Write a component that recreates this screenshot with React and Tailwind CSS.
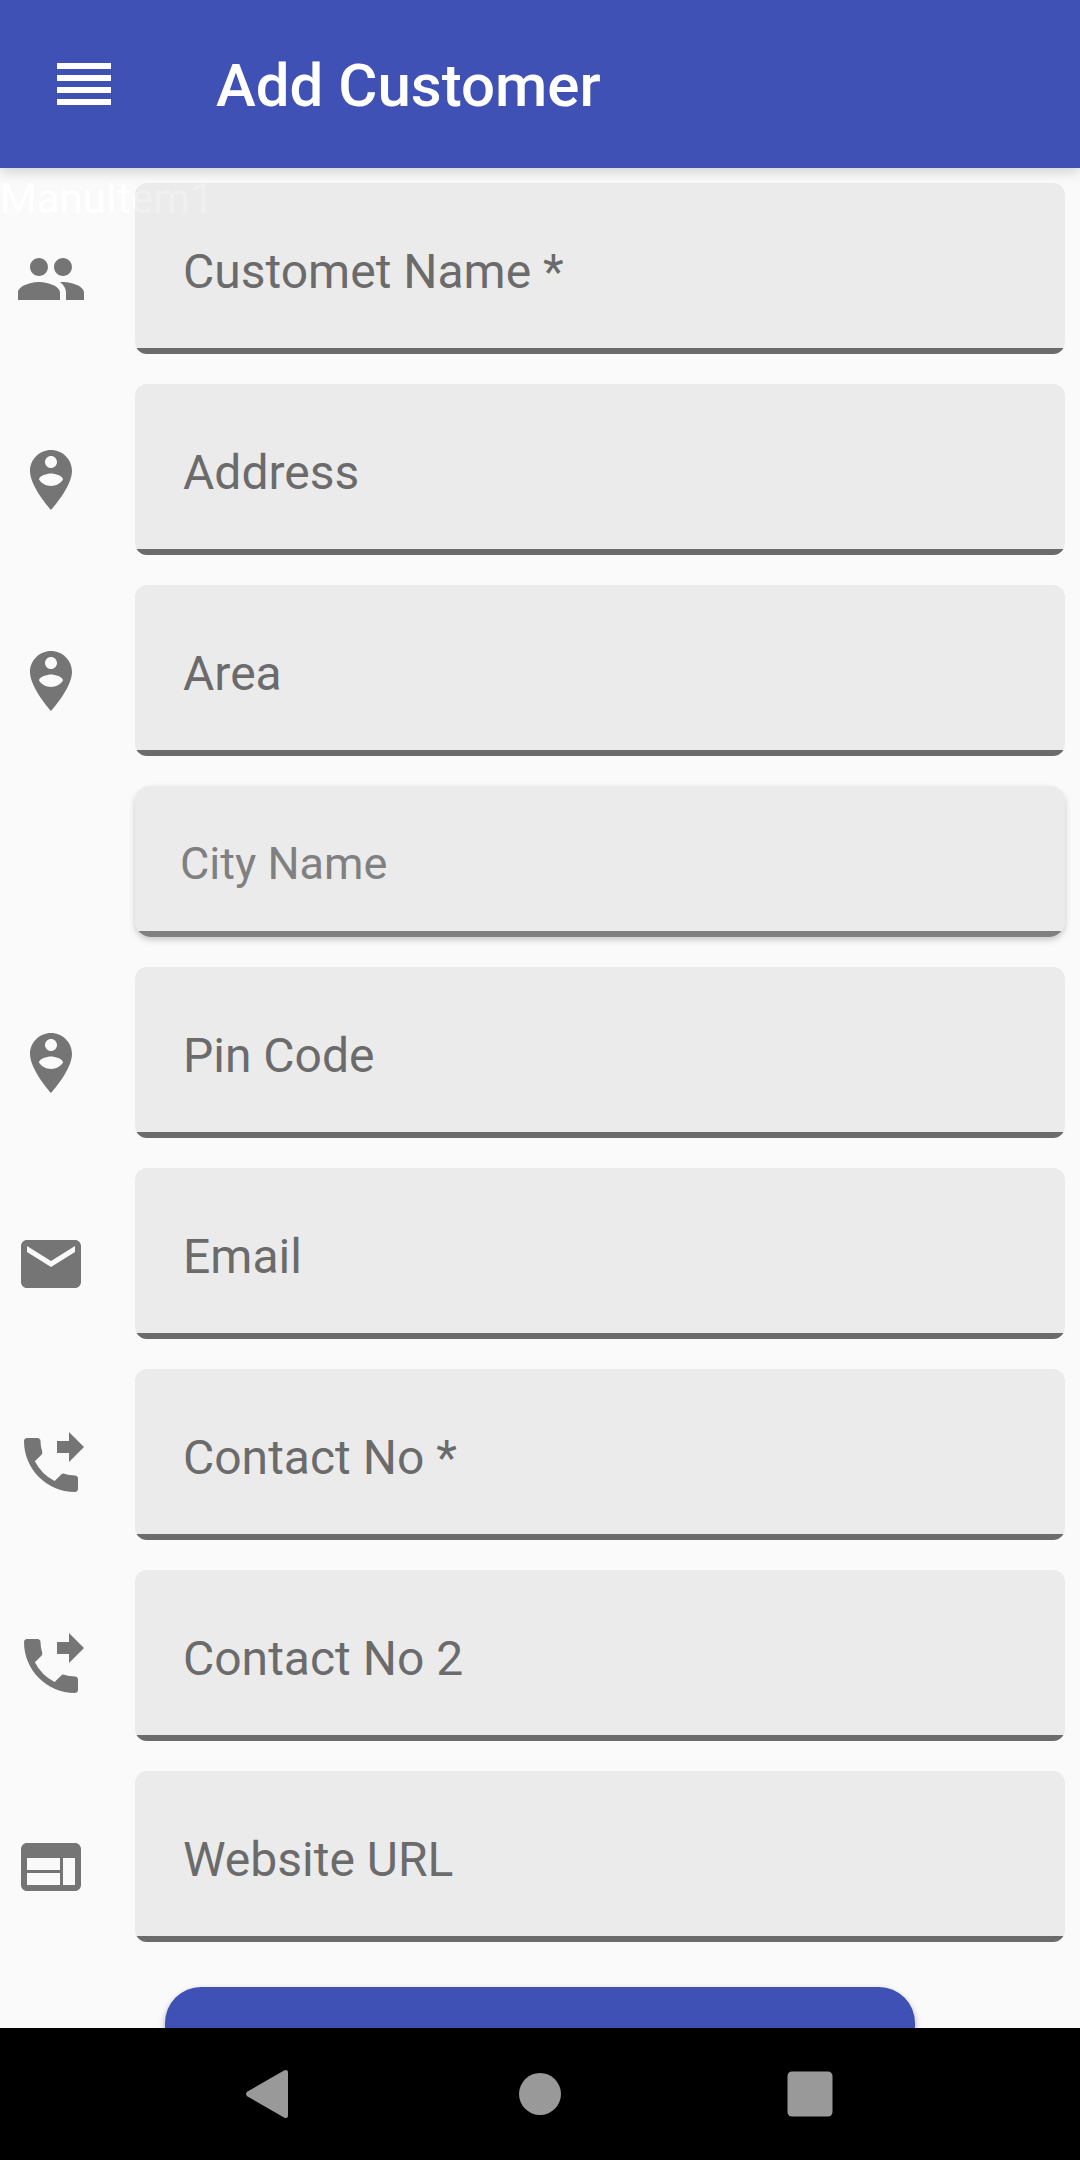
import React, { useState } from "react";
import { MdEmail, MdPeople, MdPhoneForwarded, MdReorder, MdWeb } from "react-icons/md";

const PersonPin = ({ className }) => (
  <svg viewBox="0 0 24 24" fill="currentColor" className={className}>
    <path d="M12 2C8.14 2 5 5.14 5 9c0 5.25 7 13 7 13s7-7.75 7-13c0-3.86-3.14-7-7-7zm0 2c1.1 0 2 .9 2 2s-.9 2-2 2-2-.9-2-2 .9-2 2-2zm0 10c-1.67 0-3.14-.85-4-2.15.02-1.32 2.67-2.05 4-2.05s3.98.73 4 2.05c-.86 1.3-2.33 2.15-4 2.15z" />
  </svg>
);

const fields = [
  { name: "customerName", label: "Customet Name *", type: "text", icon: MdPeople },
  { name: "address", label: "Address", type: "text", icon: PersonPin },
  { name: "area", label: "Area", type: "text", icon: PersonPin },
  { name: "city", label: "City Name", type: "picker" },
  { name: "pinCode", label: "Pin Code", type: "text", icon: PersonPin },
  { name: "email", label: "Email", type: "email", icon: MdEmail },
  { name: "contact", label: "Contact No *", type: "tel", icon: MdPhoneForwarded },
  { name: "contact2", label: "Contact No 2", type: "tel", icon: MdPhoneForwarded },
  { name: "website", label: "Website URL", type: "url", icon: MdWeb },
];

const TextField = ({ field, value, onChange }) => {
  const Icon = field.icon;

  return (
    <div className="flex items-start">
      <label htmlFor={field.name} aria-label={field.label} className="w-[120px] shrink-0 pt-[60px]">
        <Icon className="size-[72px] text-[#757575]" />
      </label>
      <div className="min-w-0 flex-1 overflow-hidden rounded-xl">
        <input
          id={field.name}
          name={field.name}
          type={field.type}
          placeholder={field.label}
          value={value}
          onChange={(e) => onChange(field.name, e.target.value)}
          className="block h-[171px] w-full border-b-6 border-[#6b6b6b] bg-black/6 px-12 pt-3 text-5xl text-[#212121] outline-none placeholder:text-[#6b6b6b]"
        />
      </div>
    </div>
  );
};

const CityPicker = ({ label }) => (
  <div className="ml-[120px] overflow-hidden rounded-2xl shadow-[0_3px_6px_rgba(0,0,0,0.2)]">
    <button
      type="button"
      className="block h-[151px] w-full border-b-6 border-[#808080] bg-[#ebebeb] px-[45px] pt-2.5 text-left text-[45px] text-[#808080]"
    >
      {label}
    </button>
  </div>
);

const NavBar = () => (
  <nav className="flex h-[132px] shrink-0 items-center bg-black px-[12.5%] text-[#999999]">
    <button type="button" aria-label="Back" className="flex flex-1 justify-center">
      <svg viewBox="0 0 72 72" className="size-[72px]" fill="currentColor">
        <path d="M50 12.6Q54 10.500 54 15V57Q54 61.500 50 59.400L13.500 38.500Q10.500 36 13.500 33.500Z" />
      </svg>
    </button>
    <button type="button" aria-label="Home" className="flex flex-1 justify-center">
      <svg viewBox="0 0 72 72" className="size-[72px]" fill="currentColor">
        <circle cx="36" cy="36" r="21" />
      </svg>
    </button>
    <button type="button" aria-label="Recent apps" className="flex flex-1 justify-center">
      <svg viewBox="0 0 72 72" className="size-[72px]" fill="currentColor">
        <rect x="13.5" y="13.5" width="45" height="45" rx="4.5" />
      </svg>
    </button>
  </nav>
);

const App = () => {
  const [values, setValues] = useState({});

  const handleChange = (name, value) => {
    setValues({ ...values, [name]: value });
  };

  return (
    <div className="flex h-screen flex-col bg-[#fafafa] font-[Roboto,sans-serif]">
      <header className="relative z-10 flex h-[168px] shrink-0 items-center gap-24 bg-[#3f51b5] px-12 text-white shadow-[0_4px_12px_rgba(0,0,0,0.16)]">
        <button type="button" aria-label="Menu">
          <MdReorder className="size-[72px]" />
        </button>
        <h1 className="pt-1 text-6xl font-medium">Add Customer</h1>
      </header>

      <main className="relative min-h-0 flex-1 overflow-y-auto [scrollbar-width:none]">
        {/* Drawer item sits under the form */}
        <span className="absolute top-1 left-0 text-[42px] leading-[54px] text-white">ManuItem1</span>

        <form className="relative flex flex-col gap-[30px] p-[15px]">
          {fields.map((field) =>
            field.type === "picker" ? (
              <CityPicker key={field.name} label={field.label} />
            ) : (
              <TextField
                key={field.name}
                field={field}
                value={values[field.name] || ""}
                onChange={handleChange}
              />
            )
          )}
          <button
            type="submit"
            aria-label="Save customer"
            className="mx-auto mt-[15px] h-36 w-full max-w-[750px] shrink-0 rounded-[36px] bg-[#3f51b5] shadow-[0_3px_6px_rgba(0,0,0,0.3)]"
          />
        </form>
      </main>

      <NavBar />
    </div>
  );
};

export default App;
